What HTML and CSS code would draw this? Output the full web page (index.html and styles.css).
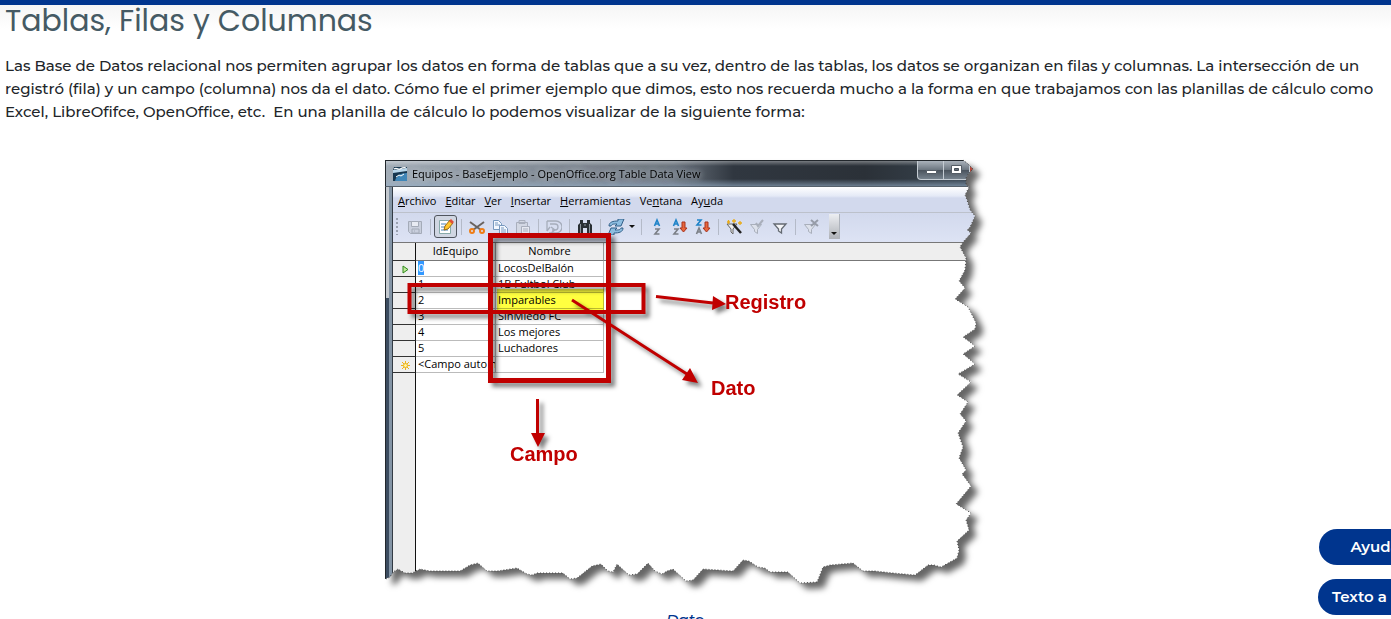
FILE: index.html
```
<!DOCTYPE html>
<html lang="es">
<head>
<meta charset="utf-8">
<title>Tablas, Filas y Columnas</title>
<link rel="stylesheet" href="styles.css">
</head>
<body>
<header class="topbar"></header>
<main class="content">
  <h1 class="heading">Tablas, Filas y Columnas</h1>
  <p class="intro">Las Base de Datos relacional nos permiten agrupar los datos en forma de tablas que a su vez, dentro de las tablas, los datos se organizan en filas y columnas. La intersección de un registró (fila) y un campo (columna) nos da el dato. Cómo fue el primer ejemplo que dimos, esto nos recuerda mucho a la forma en que trabajamos con las planillas de cálculo como Excel, LibreOfifce, OpenOffice, etc.&nbsp; En una planilla de cálculo lo podemos visualizar de la siguiente forma:</p>

  <figure class="figure">
    <div class="torn">
      <div class="window">
        <div class="titlebar">
          <svg class="app-icon" width="16" height="16" viewBox="0 0 16 16"><path d="M2 1h13v14H1V4z" fill="#16364f"/><path d="M1 4l14-2v3L1 7z" fill="#b9d6ea"/><path d="M3 15c1-5 5-8 12-8v8z" fill="#3f86b8"/><path d="M2 3c3-2 4 1 6 0s4-2 6-1" stroke="#fff" stroke-width="1.3" fill="none"/><path d="M4 11l3-2 2 1 3-2" stroke="#fff" fill="none"/></svg>
          <span class="title">Equipos - BaseEjemplo - OpenOffice.org Table Data View</span>
          <div class="controls">
            <button class="control" aria-label="Minimizar"><svg width="26" height="18" viewBox="0 0 26 18"><path d="M8.500 9.500h10v3h-10z" fill="#fff" stroke="#555d66"/></svg></button>
            <button class="control" aria-label="Maximizar"><svg width="26" height="18" viewBox="0 0 26 18"><path d="M7.500 4.500h10v8h-10z" fill="#fff" stroke="#555d66"/><path d="M10.500 7.500h4v2h-4z" fill="#69737e" stroke="#444c55"/></svg></button>
            <svg class="close" width="6" height="12" viewBox="0 0 6 12"><path d="M0 2l5 4-5 5z" fill="#b5483a"/></svg>
          </div>
        </div>
        <div class="body">
          <nav class="menubar">
            <span><u>A</u>rchivo</span><span><u>E</u>ditar</span><span><u>V</u>er</span><span><u>I</u>nsertar</span><span><u>H</u>erramientas</span><span>Ve<u>n</u>tana</span><span>Ay<u>u</u>da</span>
          </nav>
          <div class="toolbar">
            <i class="grip"></i>
            <button class="tool" aria-label="Guardar"><svg width="16" height="16" viewBox="0 0 16 16" fill="none" stroke="#a4abb8"><path d="M1.500 2.500h13v12h-11l-2-2z" fill="#c9cfdd"/><path d="M4.500 2.500h7v5h-7z" fill="#e8ebf3"/><path d="M5 10h7v4H5zM7 12h1"/></svg></button>
            <i class="sep"></i>
            <button class="tool pressed" aria-label="Editar datos"><svg width="18" height="18" viewBox="0 0 18 18"><path d="M2.500 2.500h11v13h-11z" fill="#fff" stroke="#8aa"/><path d="M4 6h5M4 9h4M4 12h7" stroke="#4a83ba"/><path d="M7 12l1-4 5-6 3 3-5 6z" fill="#ffc62e" stroke="#9a6a10"/><path d="M12 3l2-2 3 3-2 2z" fill="#df4f3a"/></svg></button>
            <i class="sep"></i>
            <button class="tool" aria-label="Cortar"><svg width="16" height="16" viewBox="0 0 16 16" fill="none"><path d="M1 3l11 8M15 3L4 11" stroke="#6b6460" stroke-width="2"/><circle cx="3" cy="12" r="2" stroke="#ee7d16" stroke-width="2"/><circle cx="13" cy="12" r="2" stroke="#ee7d16" stroke-width="2"/></svg></button>
            <button class="tool" aria-label="Copiar"><svg width="16" height="16" viewBox="0 0 16 16" fill="#f4f8ff" stroke="#7899bf"><path d="M1.500 1.500h5l3 3v6h-8zM3 4h3M3 6h5"/><path d="M7.500 6.500h5l3 3v6h-8zM9 9h3M9 11h5M9 13h5"/></svg></button>
            <button class="tool" aria-label="Pegar"><svg width="16" height="16" viewBox="0 0 16 16" fill="#d3d8e4" stroke="#a9afbd"><path d="M1.500 3.500h11v11h-11zM4 1.500h6v3H4z"/><path d="M6.500 7.500h8v8h-8zM8 10h5M8 12h5" fill="#e6e9f2"/></svg></button>
            <i class="sep"></i>
            <button class="tool" aria-label="Deshacer"><svg width="16" height="16" viewBox="0 0 16 16" fill="none" stroke="#a6adbb" stroke-width="1.3"><path d="M1 2h9a5 5 0 0 1 0 12H3M1 2v10M1 12l3-4M4 5h5a3 3 0 0 1 0 6H6M5 8l4 3-4 3"/></svg></button>
            <i class="sep"></i>
            <button class="tool" aria-label="Buscar"><svg width="18" height="16" viewBox="0 0 18 16"><path d="M4 1h3v3h4V1h3v3l2 2v9h-5V9H7v6H2V6l2-2z" fill="#2a3035"/><path d="M4.500 5v9M13.500 5v9M8 6h2" stroke="#8b959d"/></svg></button>
            <i class="sep"></i>
            <button class="tool" aria-label="Actualizar"><svg width="18" height="16" viewBox="0 0 18 16" fill="#8dbde0" stroke="#315f87"><path d="M2 7c0-4 4-5 9-5V0l6 0-3 7H8l2-2C6 5 5 5 4 7z"/><path d="M16 9c0 4-4 5-9 5v2H1l3-7h6l-2 2c4 0 5 0 6-2z"/></svg></button>
            <i class="caret"></i>
            <i class="sep"></i>
            <button class="tool" aria-label="Ordenar"><svg width="16" height="18" viewBox="0 0 16 18" fill="none" stroke-width="1.6"><path d="M5.500 8L8 2l2.500 6M6 6h4" stroke="#1f83c8"/><path d="M6 11h4l-4 5h4.500" stroke="#7b7f86"/></svg></button>
            <button class="tool" aria-label="Orden ascendente"><svg width="16" height="18" viewBox="0 0 16 18" fill="none" stroke-width="1.600"><path d="M1.500 8L4 2l2.500 6M2 6h4" stroke="#1f83c8"/><path d="M2 11h4l-4 5h4.500" stroke="#7b7f86"/><path d="M10 4h3v6h2l-3.500 4L8 10h2z" fill="#e8663c" stroke="#a8321c" stroke-width="1"/></svg></button>
            <button class="tool" aria-label="Orden descendente"><svg width="16" height="18" viewBox="0 0 16 18" fill="none" stroke-width="1.600"><path d="M2 2h4L2 7h4.500" stroke="#1f83c8"/><path d="M1.500 16L4 10l2.500 6M2 14h4" stroke="#7b7f86"/><path d="M10 4h3v6h2l-3.500 4L8 10h2z" fill="#e8663c" stroke="#a8321c" stroke-width="1"/></svg></button>
            <i class="sep"></i>
            <button class="tool" aria-label="Filtro automático"><svg width="18" height="16" viewBox="0 0 18 16" fill="none"><path d="M2 5h10l-4 5v5l-2-2v-3z" fill="#eee" stroke="#666"/><path d="M8 5l8 9" stroke="#222" stroke-width="2.500"/><path d="M2 3h3M3.500 1v4M7 2h4M9 0v4M13 4h4M15 2v4" stroke="#e9ab18" stroke-width="1.300"/></svg></button>
            <button class="tool" aria-label="Aplicar filtro"><svg width="16" height="16" viewBox="0 0 16 16" fill="#dde1eb" stroke="#a9afbb"><path d="M1.500 5.500h11l-4 5v4l-3-2v-2z"/><path d="M7 4l2 3 5-6" fill="none" stroke-width="2"/></svg></button>
            <button class="tool" aria-label="Filtro"><svg width="16" height="16" viewBox="0 0 16 16" fill="#f4f5f8" stroke="#646a72" stroke-width="1.300"><path d="M2 5h12l-4.500 5v4l-3-2v-2z"/></svg></button>
            <i class="sep"></i>
            <button class="tool" aria-label="Quitar filtro"><svg width="16" height="16" viewBox="0 0 16 16" fill="#dde1eb" stroke="#a9afbb"><path d="M1.500 5.500h11l-4 5v4l-3-2v-2z"/><path d="M8 1l7 6M15 1L8 7" fill="none" stroke="#969ca8" stroke-width="2"/></svg></button>
            <button class="overflow" aria-label="Más"><i class="caret"></i></button>
          </div>
          <div class="grid">
            <table class="data">
              <thead><tr><th class="mark"></th><th class="id">IdEquipo</th><th class="name">Nombre</th><th></th></tr></thead>
              <tbody>
                <tr><td class="mark"><svg width="9" height="9" viewBox="0 0 9 9"><path d="M2 1l5 3.500L2 8z" fill="#c0ea9a" stroke="#2f8a1c"/></svg></td><td><span class="selected">0</span></td><td>LocosDelBalón</td><td></td></tr>
                <tr><td class="mark"></td><td>1</td><td>1B Fultbol Club</td><td></td></tr>
                <tr><td class="mark"></td><td>2</td><td>Imparables</td><td></td></tr>
                <tr><td class="mark"></td><td>3</td><td>SinMiedo FC</td><td></td></tr>
                <tr><td class="mark"></td><td>4</td><td>Los mejores</td><td></td></tr>
                <tr><td class="mark"></td><td>5</td><td>Luchadores</td><td></td></tr>
                <tr><td class="mark"><svg width="9" height="9" viewBox="0 0 9 9"><path d="M4.500 0v9M0 4.500h9M1 1l7 7M8 1L1 8" stroke="#eeb21e"/><circle cx="4.500" cy="4.500" r="2" fill="#fff3a0" stroke="#eeb21e"/></svg></td><td>&lt;Campo auto n</td><td></td><td></td></tr>
              </tbody>
            </table>
          </div>
        </div>
      </div>
    </div>
    <div class="highlight"></div>
    <svg class="notes" viewBox="0 0 600 425">
      <polyline class="tear" points="578,0 583,4 588,9 583,14 581,18 581,25 584,27 580,35 582,40 585,50 590,56 585,67 582,70 586,73 578,82 575,87 581,98 580,110 574,121 580,128 570,139 583,147 587,155 591,163 590,169 578,177 590,186 578,194 590,204 573,214 586,222 572,235 583,242 575,254 581,261 573,273 578,287 574,298 581,310 577,314 586,326 571,344 586,353 581,360 584,370 572,381 574,390 572,398 556,407 549,405 543,405 530,415 508,413 490,411 478,411 468,403 445,405 438,407 432,422 415,423 403,412 385,412 380,408 373,407 364,401 358,400 348,411 318,409 308,420 301,421 288,409 282,411 277,414 270,411 263,403 252,414 244,415 232,404 228,412 223,411 216,404 207,406 192,418 185,419 178,413 152,413 147,415 142,414 132,408 112,411 102,411 93,403 85,405 75,411 45,411 35,409 27,413 20,413 13,409 8,412 5,417 1,419"/>
      <g class="marks">
        <rect x="105.500" y="75.500" width="118" height="145" stroke-width="5"/>
        <rect x="24.500" y="125" width="234" height="27" stroke-width="4"/>
        <path d="M271 136.500L328 143M187 140l118 76M152.500 239v37" stroke-width="3"/>
        <path class="head" d="M341 144l-14 6 1-14zM313 223l-16-3 8-12zM153 287l-7-14h14z"/>
      </g>
      <g class="labels"><text x="340" y="149">Registro</text><text x="326" y="235">Dato</text><text x="125" y="301">Campo</text></g>
    </svg>
    <figcaption class="caption">Dato</figcaption>
  </figure>
</main>
<aside class="floating">
  <button class="pill">Ayuda</button>
  <button class="pill wide">Texto a</button>
</aside>
</body>
</html>
```
FILE: styles.css
```
* { box-sizing: border-box; }
html { scrollbar-width: none; }
body { margin: 0; background: #fff; color: #212529; font-family: Montserrat, Inter, sans-serif; overflow-x: hidden; }
.topbar { height: 5px; background: #00358e; }
.content { padding: 0 26px 0 5px; background: linear-gradient(#f5f5f5, #fff 24px); }
.heading { margin: 0; color: #455a64; font-family: Poppins, Inter, sans-serif; font-size: 30px; font-weight: 400; line-height: 32px; }
.intro { margin: 17px -10px 0 0; font-size: 15px; font-weight: 500; line-height: 23px; }
.figure { position: relative; width: 600px; margin: 37px auto 0; }
.torn { filter: drop-shadow(7px 6px 3px rgba(0, 0, 0, .6)); }
.window {
  height: 425px; display: flex; flex-direction: column; padding-left: 8px;
  background: linear-gradient(90deg, #22272c 1px, transparent 1px 7px, #333b44 7px 8px, transparent 8px),
    linear-gradient(90deg, transparent 4px, #8394a5 4px 8px, transparent 8px),
    linear-gradient(#c3c8ce 138px, #3b4c60 138px) 0 0 / 8px 100% no-repeat, #fff;
  color: #000; font-family: "Segoe UI", "Open Sans", sans-serif; font-size: 11px;
  clip-path: polygon(0 0, 578px 0, 583px 4px, 588px 9px, 583px 14px, 581px 18px, 581px 25px, 584px 27px, 580px 35px, 582px 40px, 585px 50px, 590px 56px, 585px 67px, 582px 70px, 586px 73px, 578px 82px, 575px 87px, 581px 98px, 580px 110px, 574px 121px, 580px 128px, 570px 139px, 583px 147px, 587px 155px, 591px 163px, 590px 169px, 578px 177px, 590px 186px, 578px 194px, 590px 204px, 573px 214px, 586px 222px, 572px 235px, 583px 242px, 575px 254px, 581px 261px, 573px 273px, 578px 287px, 574px 298px, 581px 310px, 577px 314px, 586px 326px, 571px 344px, 586px 353px, 581px 360px, 584px 370px, 572px 381px, 574px 390px, 572px 398px, 556px 407px, 549px 405px, 543px 405px, 530px 415px, 508px 413px, 490px 411px, 478px 411px, 468px 403px, 445px 405px, 438px 407px, 432px 422px, 415px 423px, 403px 412px, 385px 412px, 380px 408px, 373px 407px, 364px 401px, 358px 400px, 348px 411px, 318px 409px, 308px 420px, 301px 421px, 288px 409px, 282px 411px, 277px 414px, 270px 411px, 263px 403px, 252px 414px, 244px 415px, 232px 404px, 228px 412px, 223px 411px, 216px 404px, 207px 406px, 192px 418px, 185px 419px, 178px 413px, 152px 413px, 147px 415px, 142px 414px, 132px 408px, 112px 411px, 102px 411px, 93px 403px, 85px 405px, 75px 411px, 45px 411px, 35px 409px, 27px 413px, 20px 413px, 13px 409px, 8px 412px, 5px 417px, 0 419px);
}
.titlebar {
  display: flex; align-items: center; height: 27px; margin-left: -8px; padding-left: 6px;
  border-top: 1px solid #22272c; border-bottom: 1px solid #56616c; border-left: 1px solid #22272c;
  background: linear-gradient(rgba(255, 255, 255, .35), transparent 5px 18px, rgba(150, 175, 200, .6)), linear-gradient(90deg, #a3adb7, #858e98 25%, #6b747e 48%, #303740 58%, #2b3138 80%, #3b4854);
}
.title { margin-left: 4px; white-space: nowrap; text-shadow: 0 0 6px rgba(200, 208, 215, .8), 0 0 8px rgba(200, 208, 215, .7); }
.controls { display: flex; align-self: flex-start; margin-left: auto; margin-right: 9px; border: 1px solid #c5ccd3; border-top: 0; border-radius: 0 0 0 4px; background: linear-gradient(#aab2bb, #6b757f 50%, #4a535d 51%, #76828d); }
.control { width: 26px; height: 18px; padding: 0; border: 0; border-right: 1px solid #c5ccd3; background: none; }
.control svg { display: block; }
.close { margin: 3px -1px 0 0; }
.body { flex: 1; display: flex; flex-direction: column; }
.menubar { display: flex; align-items: center; gap: 9px; height: 26px; padding: 2px 0 0 5px; border-bottom: 1px solid #bcc1cb; background: linear-gradient(#fff, #e4e9f6 9px, #d2d9ed 11px); }
.toolbar { display: flex; align-items: center; height: 29px; padding: 0 0 2px 3px; background: linear-gradient(#d2d9ed, #dde3f4); }
.grip { width: 2px; height: 17px; margin-right: 5px; background: repeating-linear-gradient(#9aa1b0 0 2px, transparent 2px 4px); }
.tool { display: flex; align-items: center; justify-content: center; flex: none; width: 23px; height: 23px; padding: 0; border: 0; background: none; }
.tool.pressed { border: 1px solid #50555e; border-radius: 3px; background: #d0d6e2; }
.sep { flex: none; width: 8px; height: 16px; background: linear-gradient(#b4bac8, #b4bac8) center / 1px 100% no-repeat; }
.caret { flex: none; width: 10px; height: 3px; background: #111; clip-path: polygon(2px 0, 8px 0, 5px 3px); }
.overflow { display: flex; align-items: flex-end; justify-content: center; width: 11px; height: 25px; margin-left: 7px; padding: 0 0 4px; border: 0; border-right: 1px solid #aeb3bc; background: linear-gradient(#eceef2, #aeb1b7); }
.grid { flex: 1; border-top: 1px solid #777; background: linear-gradient(90deg, #eee 22px, #111 22px 23px, #fff 23px); }
.data { width: 100%; table-layout: fixed; border-collapse: separate; border-spacing: 0; }
.data th { height: 18px; padding: 0; border-bottom: 1px solid #777; border-right: 1px solid #999; background: #eee; font-weight: 400; line-height: 15px; padding-bottom: 2px; }
.data th:last-child { border-right: 0; }
.data td { height: 16px; padding: 0 0 1px 2px; border-right: 1px solid #bbb; border-bottom: 1px solid #bbb; background: #fff; line-height: 14px; white-space: nowrap; overflow: hidden; }
.data td:last-child { border: 0; }
.data .mark { width: 23px; padding: 0; border-right: 1px solid #111; border-bottom-color: #333; background: #eee; text-align: center; }
.data td.mark svg { display: block; margin: 2px 0 0 8px; }
.data .id { width: 80px; }
.data .name { width: 108px; }
.selected { background: #3399ff; color: #fff; }
.highlight { position: absolute; left: 112px; top: 129px; width: 107px; height: 21px; background: #ffff40; mix-blend-mode: multiply; }
.notes { position: absolute; left: 0; top: 0; width: 600px; height: 425px; overflow: visible; pointer-events: none; }
.tear { fill: none; stroke: #444; stroke-width: 1px; stroke-dasharray: 1 2; }
.marks { fill: none; stroke: #c00000; filter: drop-shadow(4px 4px 2px rgba(0, 0, 0, .5)); }
.marks .head { fill: #c00000; stroke: none; }
.labels { fill: #c00000; font: bold 20px "Liberation Sans", Arial, sans-serif; }
.caption { margin-top: 25px; color: #00358e; font-size: 15px; font-style: italic; font-weight: 500; line-height: 20px; text-align: center; }
.floating { position: fixed; right: -40px; bottom: 4px; display: flex; flex-direction: column; align-items: flex-end; gap: 14px; }
.pill { width: 112px; height: 36px; padding: 0 0 2px; border: 0; border-radius: 18px; background: #00358e; color: #fff; font: 600 15px Montserrat, Inter, sans-serif; }
.pill.wide { width: 113px; padding-left: 14px; text-align: left; }
```
